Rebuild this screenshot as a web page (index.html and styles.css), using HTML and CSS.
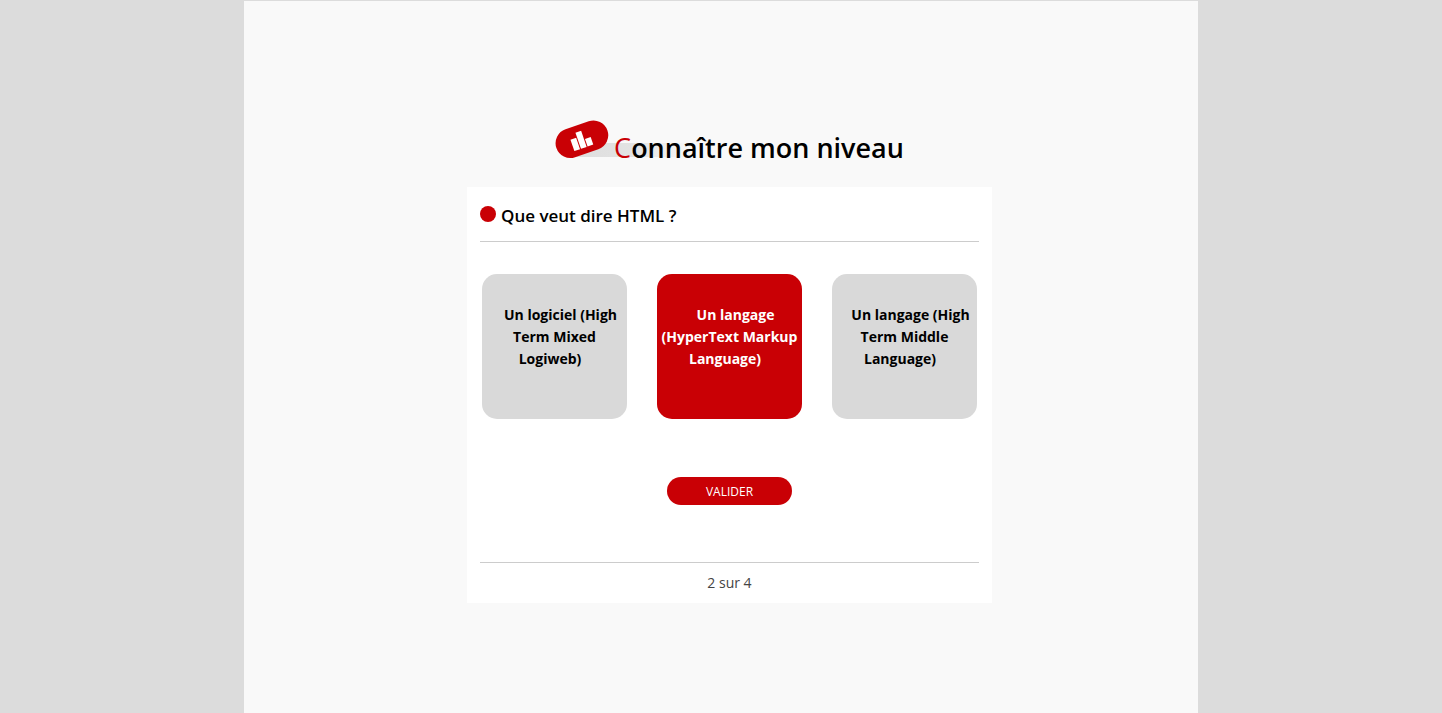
FILE: index.html
```html
<!DOCTYPE html>
<html lang="fr">
<head>
<meta charset="utf-8">
<meta name="viewport" content="width=device-width, initial-scale=1">
<title>Connaître mon niveau</title>
<link rel="stylesheet" href="styles.css">
</head>
<body>
<main class="page">
  <h1 class="title">
    <svg class="title-icon" width="150" height="40" viewBox="0 0 150 40" aria-hidden="true">
      <defs>
        <linearGradient id="fade" x1="0" x2="1" y1="0" y2="0">
          <stop offset="0" stop-color="#dedede"/>
          <stop offset="0.5" stop-color="#e3e3e3"/>
          <stop offset="1" stop-color="#f9f9f9"/>
        </linearGradient>
      </defs>
      <path d="M20 37 46 23H140V37Z" fill="url(#fade)"/>
      <rect x="0" y="4.500" width="54" height="29.500" rx="14.750" fill="#c90005" transform="rotate(-19 27 19.500)"/>
      <g fill="#fff" transform="rotate(-19 27 19.500)">
        <rect x="16" y="16" width="6" height="12"/>
        <rect x="23" y="11" width="6" height="17"/>
        <rect x="30" y="20" width="6" height="8"/>
      </g>
    </svg>
    <span class="title-text"><span class="initial">C</span>onnaître mon niveau</span>
  </h1>
  <form class="quiz">
    <h2 class="question"><span class="dot"></span>Que veut dire HTML ?</h2>
    <div class="choices">
      <label class="choice"><input class="radio" type="radio" name="html"><span class="answer">Un logiciel (High Term Mixed Logiweb)</span></label>
      <label class="choice"><input class="radio" type="radio" name="html" checked><span class="answer">Un langage (HyperText Markup Language)</span></label>
      <label class="choice"><input class="radio" type="radio" name="html"><span class="answer">Un langage (High Term Middle Language)</span></label>
    </div>
    <button class="submit" type="button">VALIDER</button>
    <p class="progress">2 sur 4</p>
  </form>
</main>
</body>
</html>
```

FILE: styles.css
```css
* {
  box-sizing: border-box;
}

body {
  margin: 0;
  background: #dcdcdc;
  color: #000;
  font-family: "Open Sans", "Noto Sans", sans-serif;
}

.page {
  display: flex;
  flex-direction: column;
  align-items: center;
  max-width: 954px;
  min-height: 100vh;
  margin: 0 auto;
  padding: 119px 0 64px 17px;
  border-top: 1px solid #dcdcdc;
  background: #f9f9f9;
}

.title {
  display: flex;
  align-items: flex-start;
  margin: 0;
  font-size: 27px;
  line-height: 38px;
  font-weight: 600;
}

.title-icon {
  flex: none;
  margin-right: -91px;
}

.title-text {
  position: relative;
  padding-top: 9px;
}

.initial {
  color: #c90005;
  font-weight: 400;
}

.quiz {
  display: flex;
  flex-direction: column;
  width: 100%;
  max-width: 525px;
  margin-top: 20px;
  padding: 16px 13px 8px;
  background: #fff;
}

.question {
  display: flex;
  align-items: center;
  gap: 5px;
  margin: 0;
  padding-bottom: 12px;
  border-bottom: 1px solid #ccc;
  font-size: 17px;
  line-height: 26px;
  font-weight: 600;
}

.dot {
  width: 16px;
  height: 16px;
  margin-bottom: 4px;
  border-radius: 50%;
  background: #c90005;
}

.choices {
  display: flex;
  flex-wrap: wrap;
  justify-content: center;
  gap: 30px;
  margin: 32px 0 58px;
}

.choice {
  width: 145px;
  min-height: 145px;
  padding: 30px 3px;
  border-radius: 15px;
  background: #d9d9d9;
  font-size: 14px;
  line-height: 22px;
  font-weight: 700;
  text-align: center;
  cursor: pointer;
}

.choice:has(.radio:checked) {
  background: #c90005;
  color: #fff;
}

.radio {
  appearance: none;
  width: 12px;
  height: 12px;
  margin: 0;
}

.answer {
  padding-right: 9px;
}

.submit {
  align-self: center;
  width: 125px;
  height: 28px;
  padding: 0;
  border: 0;
  border-radius: 14px;
  background: #c90005;
  color: #fff;
  font-family: inherit;
  font-size: 12px;
  cursor: pointer;
}

.progress {
  margin: 57px 0 0;
  padding-top: 8px;
  border-top: 1px solid #ccc;
  color: #444;
  font-size: 14px;
  line-height: 24px;
  text-align: center;
}
```
